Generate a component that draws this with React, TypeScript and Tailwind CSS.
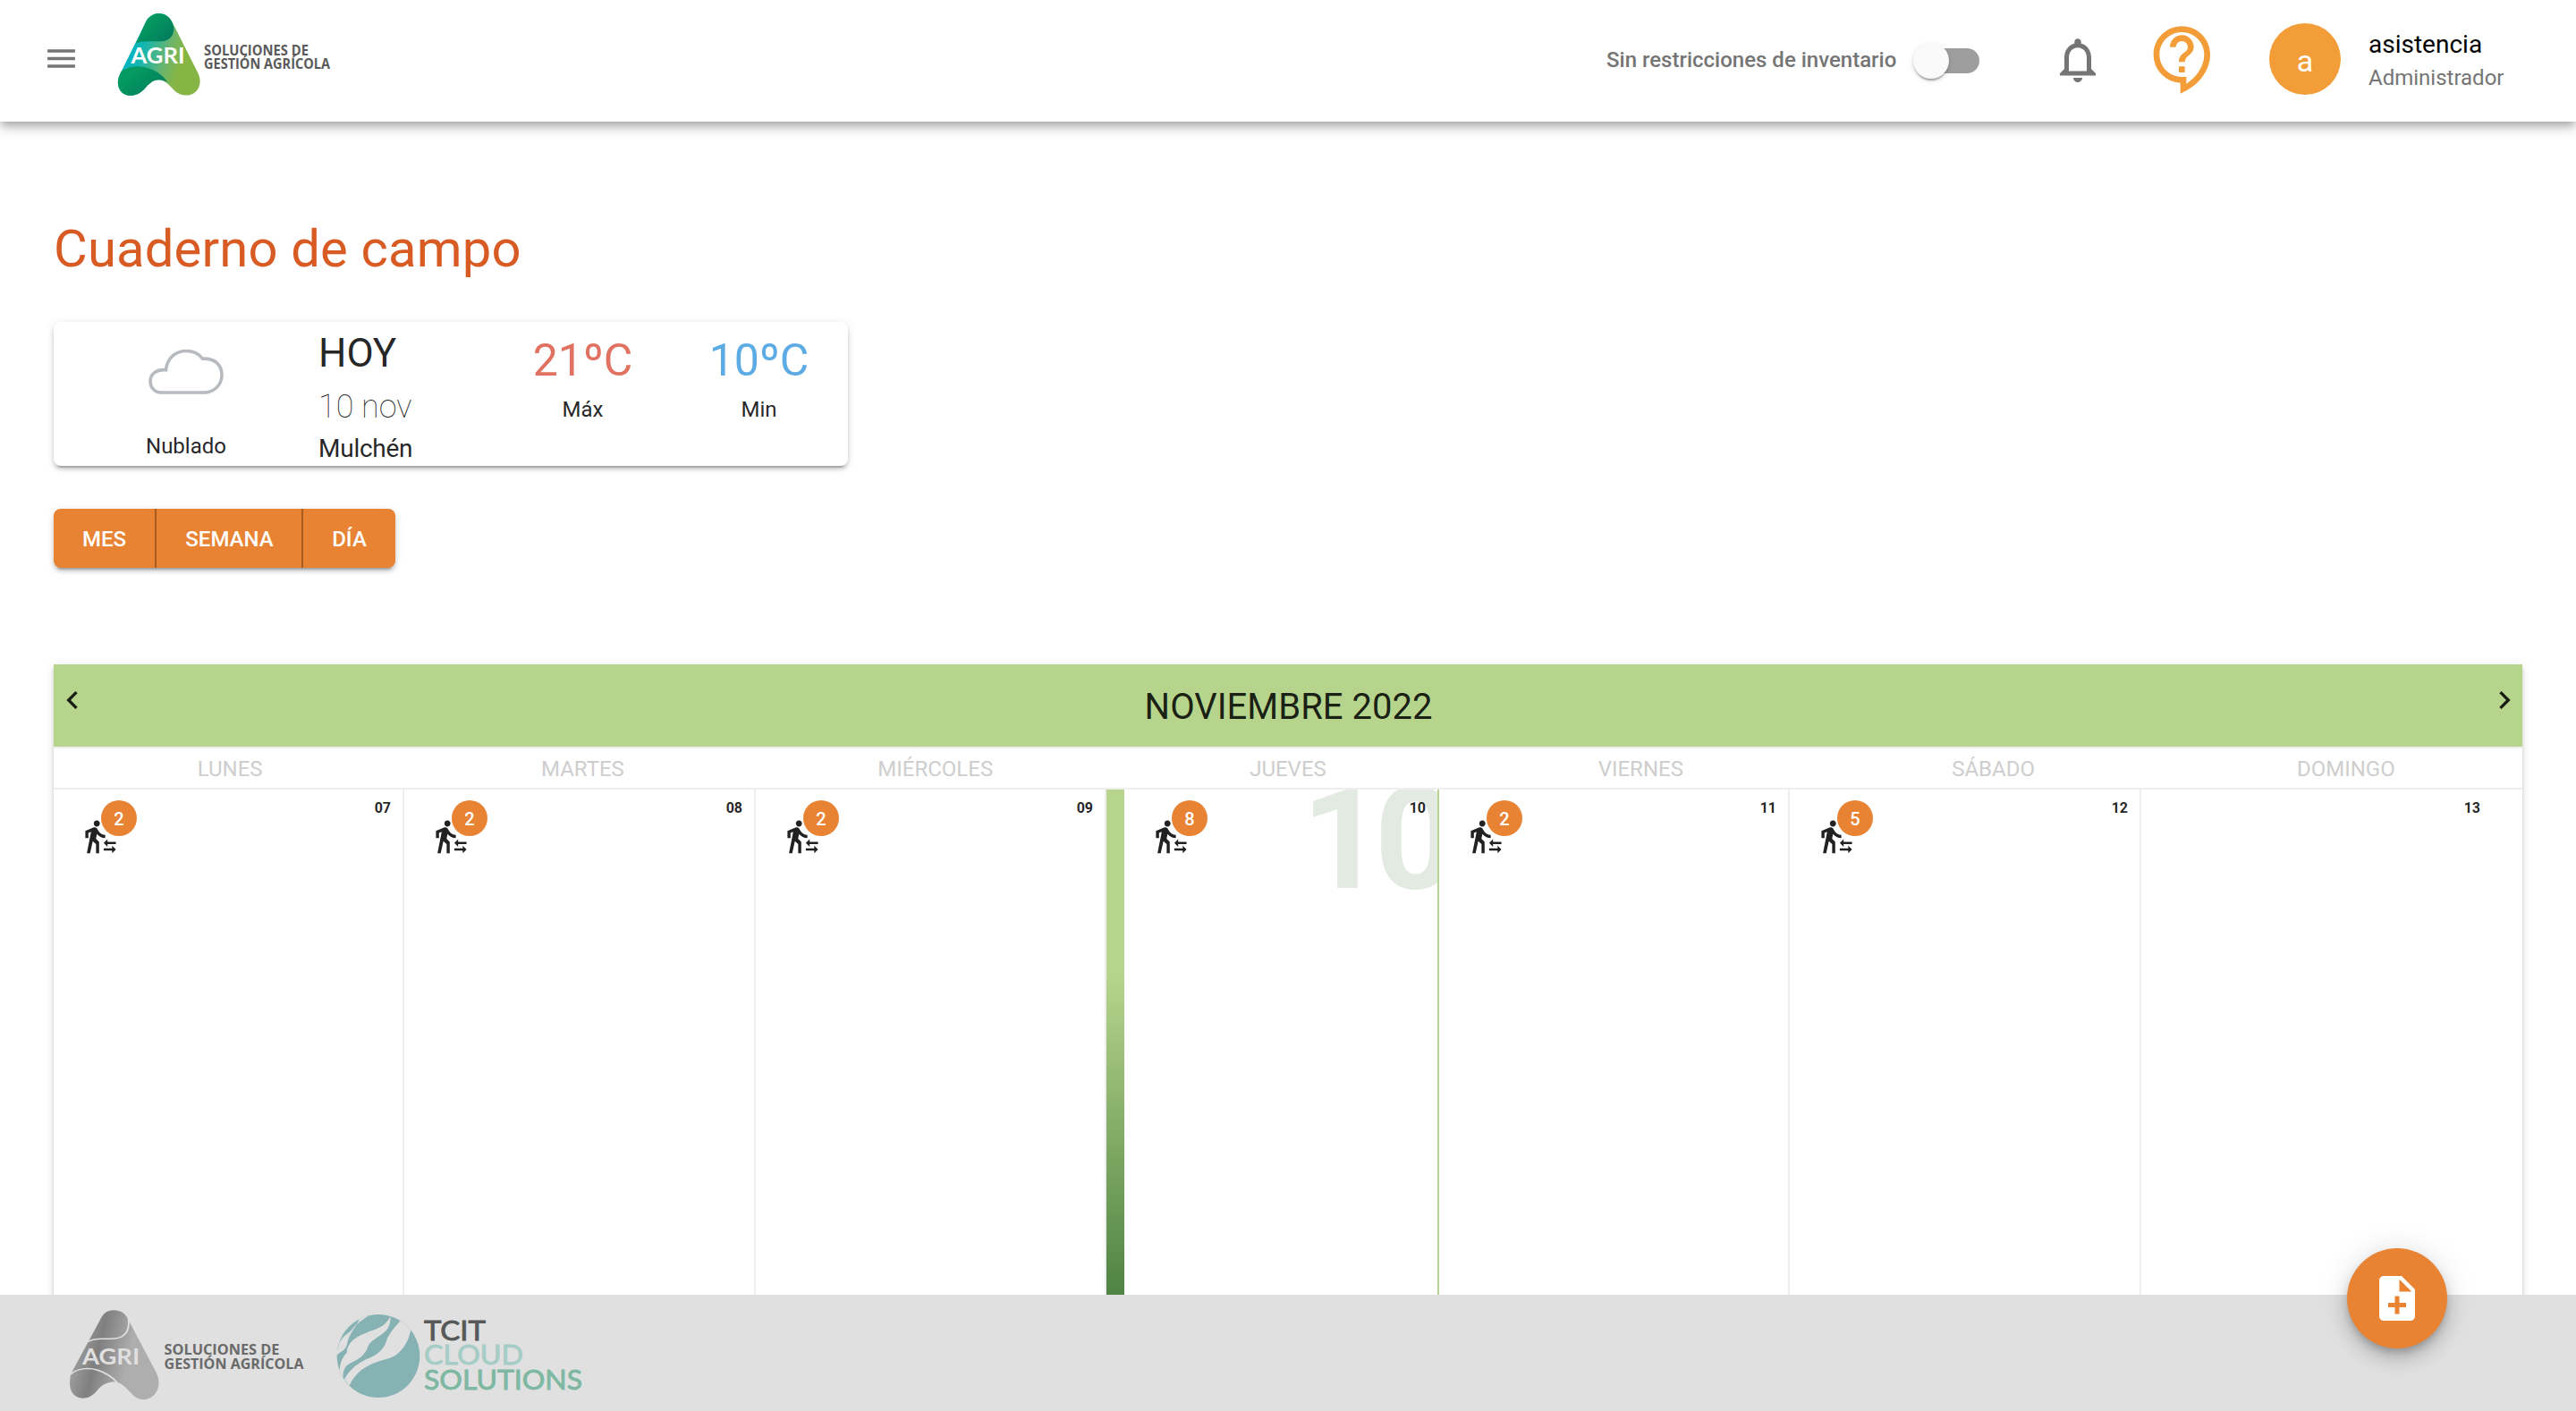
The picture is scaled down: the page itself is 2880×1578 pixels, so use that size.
import React from "react";

type Day = { date: string; count?: number; width: string; today?: boolean };

const weekDays = ["LUNES", "MARTES", "MIÉRCOLES", "JUEVES", "VIERNES", "SÁBADO", "DOMINGO"];

const days: Day[] = [
  { date: "07", count: 2, width: "w-[392px]" },
  { date: "08", count: 2, width: "w-[393px]" },
  { date: "09", count: 2, width: "w-[392px]" },
  { date: "10", count: 8, width: "w-[372px]", today: true },
  { date: "11", count: 2, width: "w-[392px]" },
  { date: "12", count: 5, width: "w-[393px]" },
  { date: "13", width: "grow" },
];

function Icon({ d, className }: { d: string; className: string }) {
  return (
    <svg viewBox="0 0 24 24" fill="currentColor" className={`block shrink-0 ${className}`}>
      <path d={d} />
    </svg>
  );
}

const ICONS = {
  menu: "M3 18h18v-2H3v2zm0-5h18v-2H3v2zm0-7v2h18V6H3z",
  bell: "M12 22c1.1 0 2-.9 2-2h-4c0 1.1.9 2 2 2zm6-6v-5c0-3.07-1.63-5.64-4.5-6.32V4c0-.83-.67-1.5-1.5-1.5s-1.5.67-1.5 1.5v.68C7.64 5.36 6 7.92 6 11v5l-2 2v1h16v-1l-2-2zm-2 1H8v-6c0-2.48 1.51-4.5 4-4.5s4 2.02 4 4.5v6z",
  support:
    "M11 23.59v-3.6c-5.01-.26-9-4.42-9-9.49C2 5.26 6.26 1 11.5 1S21 5.26 21 10.5c0 4.95-3.44 9.93-8.57 12.4l-1.43.69zM11.5 3C7.36 3 4 6.36 4 10.5S7.36 18 11.5 18H13v2.3c3.64-2.3 6-6.08 6-9.8C19 6.36 15.64 3 11.5 3zm-1 11.5h2v2h-2v-2zm2-1.5h-2c0-3.25 3-3 3-5 0-1.1-.9-2-2-2s-2 .9-2 2h-2c0-2.21 1.79-4 4-4s4 1.79 4 4c0 2.5-3 2.75-3 5z",
  left: "M15.41 7.41 14 6l-6 6 6 6 1.41-1.41L10.83 12z",
  right: "M10 6 8.59 7.41 13.17 12l-4.58 4.59L10 18l6-6z",
  transfer:
    "M16.49 15.5v-1.75L14 16.25l2.49 2.5V17H22v-1.5h-5.51zM19.51 19.75H14v1.5h5.51V23L22 20.5 19.51 18v1.75zM9.5 5.5c1.1 0 2-.9 2-2s-.9-2-2-2-2 .9-2 2 .9 2 2 2zM5.75 8.9L3 23h2.1l1.75-8L9 17v6h2v-7.55L8.95 13.4l.6-3C10.85 12 12.8 13 15 13v-2c-1.85 0-3.45-1-4.35-2.45l-.95-1.6C9.35 6.35 8.7 6 8 6c-.25 0-.5.05-.75.15L2 8.3V13h2V9.65l1.75-.75z",
  noteAdd:
    "M14 2H6c-1.1 0-1.99.9-1.99 2L4 20c0 1.1.89 2 1.99 2H18c1.1 0 2-.9 2-2V8l-6-6zm2 14h-3v3h-2v-3H8v-2h3v-3h2v3h3v2zm-3-7V3.5L18.5 9H13z",
};

function Label(props: {
  x: number;
  y: number;
  w: number;
  size: number;
  fill: string;
  weight?: number;
  family?: string;
  outline?: number;
  children: string;
}) {
  return (
    <text
      x={props.x}
      y={props.y}
      textLength={props.w}
      lengthAdjust="spacingAndGlyphs"
      fontSize={props.size}
      fontWeight={props.weight ?? 700}
      fontFamily={props.family ?? "'Open Sans', sans-serif"}
      fill={props.fill}
      stroke={props.fill}
      strokeWidth={props.outline ?? 0}
    >
      {props.children}
    </text>
  );
}

function HeaderLogo() {
  return (
    <svg viewBox="131 0 240 136" className="ml-[42px] h-[136px] w-60 shrink-0">
      <defs>
        <linearGradient id="band" x1="0" y1="0.3" x2="1" y2="0.6">
          <stop offset="0.1" stopColor="#00b3c6" />
          <stop offset="0.3" stopColor="#0fb6b4" />
          <stop offset="0.62" stopColor="#6db56a" />
          <stop offset="0.78" stopColor="#86b545" />
        </linearGradient>
        <linearGradient id="leaf" x1="0" y1="0" x2="1" y2="0.8">
          <stop offset="0.3" stopColor="#049a60" />
          <stop offset="1" stopColor="#027a5e" />
        </linearGradient>
      </defs>
      <g transform="scale(0.33333)">
        <path
          fill="url(#band)"
          d="M487 78C496 57 512 45 533 45C556 45 572 58 583 85L665 247C678 276 668 302 648 314C626 325 603 320 584 303C566 284 552 269 533 268C512 268 498 283 485 298C465 320 442 325 420 317C396 305 389 278 402 250Z"
        />
        <path
          fill="url(#leaf)"
          d="M487 78C496 57 512 45 533 45C562 45 582 70 583 98C582 122 566 138 538 139L492 139C476 139 465 141 455 148Z"
        />
        <path
          fill="url(#leaf)"
          d="M408 238C440 218 475 219 505 231C530 241 550 257 562 276C552 271 543 268 533 268C512 268 498 283 485 298C465 320 442 325 420 317C396 305 389 278 402 250Z"
        />
      </g>
      <Label x={146.5} y={70.5} w={60} size={24} fill="#fff" family="Lato, sans-serif">
        AGRI
      </Label>
      <Label x={228} y={61.5} w={117} size={15.5} fill="#5a5a5a">
        SOLUCIONES DE
      </Label>
      <Label x={228} y={76.5} w={141} size={15.5} fill="#5a5a5a">
        GESTIÓN AGRÍCOLA
      </Label>
    </svg>
  );
}

function FooterLogos() {
  return (
    <svg viewBox="40 1448 640 130" className="ml-10 h-[130px] w-[640px]">
      <defs>
        <linearGradient id="steel" x1="0" y1="0" x2="1" y2="0.25">
          <stop offset="0" stopColor="#b4b4b4" />
          <stop offset="0.4" stopColor="#7f7f7f" />
          <stop offset="0.75" stopColor="#aeaeae" />
        </linearGradient>
        <clipPath id="globe">
          <ellipse cx="910" cy="289.5" rx="110" ry="139.5" />
        </clipPath>
      </defs>
      <g transform="translate(40 1420) scale(0.4209 0.33333)">
        <path
          fill="url(#steel)"
          d="M171 168C178 148 190 136 207 136C226 136 239 148 246 168L320 345C333 380 326 410 308 427C292 440 276 439 261 424C243 402 229 377 207 376C184 378 172 392 161 408C146 430 130 434 114 429C92 418 86 390 93 350Z"
        />
        <path
          fill="none"
          stroke="#e0e0e0"
          strokeWidth="4.5"
          d="M140 241C155 230 170 232 185 232C215 233 235 228 243 205C248 190 248 178 246 160M92 351C112 330 140 328 162 336C185 345 202 358 216 378"
        />
        <g clipPath="url(#globe)">
          <path fill="#86b2b3" d="M790 140H1030V440H790Z" />
          <g fill="#e0e0e0">
            <path d="M968 172C945 205 935 222 930 245C920 275 900 290 877 301C850 318 832 338 820 368L833 389C845 355 865 332 890 318C910 304 935 302 955 288C980 265 990 235 996 204L1015 170L975 150Z" />
            <path d="M942 155C932 185 915 195 885 208C850 225 828 242 826 278C811 298 807 320 807 346L816 367C815 335 822 322 838 312C865 296 877 280 882 258C890 235 915 225 930 205C940 190 942 175 942 155Z" />
            <path d="M859 166C853 190 842 200 832 210C815 225 806 240 803 262C820 258 826 245 829 225C836 200 855 178 882 156L868 140Z" />
            <path d="M856 175C842 205 830 225 827 250C822 275 805 275 799 290L790 285L803 262C822 258 825 235 834 210Z" />
          </g>
        </g>
      </g>
      <Label x={92} y={1525.5} w={64} size={25} fill="#e0e0e0" family="Lato, sans-serif">
        AGRI
      </Label>
      <Label x={183.5} y={1515} w={129} size={16.5} fill="#6a6a6a">
        SOLUCIONES DE
      </Label>
      <Label x={183.5} y={1531} w={156} size={16.5} fill="#6a6a6a">
        GESTIÓN AGRÍCOLA
      </Label>
      <Label x={474} y={1498.5} w={69} size={31} fill="#575959" weight={400} outline={0.9} family="Lato, sans-serif">
        TCIT
      </Label>
      <Label x={474} y={1526} w={111} size={31} fill="#a5cdc5" weight={400} outline={0.9} family="Lato, sans-serif">
        CLOUD
      </Label>
      <Label x={474} y={1554} w={177} size={31} fill="#7fb8a2" weight={400} outline={0.9} family="Lato, sans-serif">
        SOLUTIONS
      </Label>
    </svg>
  );
}

function Header() {
  return (
    <header className="relative z-10 flex h-[136px] items-start bg-white shadow-[0_4px_8px_-2px_rgba(0,0,0,0.2),0_8px_10px_rgba(0,0,0,0.14),0_2px_20px_rgba(0,0,0,0.12)]">
      <Icon d={ICONS.menu} className="mt-[45px] ml-12 size-[41px] text-[#757575]" />
      <HeaderLogo />
      <div className="ml-auto flex w-[1084px] items-start">
        <span className="mt-[53px] w-[343px] text-2xl leading-7 font-medium whitespace-nowrap text-[#757575]">
          Sin restricciones de inventario
        </span>
        <div className="relative mt-12 h-10 w-[74px]">
          <div className="absolute top-1.5 right-0 h-7 w-[68px] rounded-full bg-[#9e9e9e]" />
          <div className="absolute top-0 left-0 size-10 rounded-full bg-[#fafafa] shadow-[0_4px_2px_-2px_rgba(0,0,0,0.2),0_2px_2px_rgba(0,0,0,0.14),0_2px_6px_rgba(0,0,0,0.12)]" />
        </div>
        <Icon d={ICONS.bell} className="mt-[37px] ml-20 size-[60px] text-[#757575]" />
        <Icon d={ICONS.support} className="mt-[26px] ml-12 size-20 text-[#f39d38]" />
        <div className="mt-[26px] ml-14 flex size-20 items-center justify-center rounded-full bg-[#f39d38] pt-[3px] text-[34px] leading-none text-white">
          a
        </div>
        <div className="ml-[31px] flex flex-col">
          <span className="mt-[34px] text-[28px] leading-8 text-black">asistencia</span>
          <span className="mt-[7px] text-2xl leading-7 text-[#757575]">Administrador</span>
        </div>
      </div>
    </header>
  );
}

function Temperature({ value, label, color }: { value: string; label: string; color: string }) {
  return (
    <div className="flex w-[197px] flex-col items-center pt-3.5">
      <span className={`text-[50px] leading-[58px] ${color}`}>{value}</span>
      <span className="mt-3 text-2xl leading-7">{label}</span>
    </div>
  );
}

function WeatherCard() {
  return (
    <section className="mt-12 flex h-[161px] w-[888px] rounded-lg bg-white shadow-[0_6px_2px_-4px_rgba(0,0,0,0.2),0_4px_4px_rgba(0,0,0,0.14),0_2px_10px_rgba(0,0,0,0.12)]">
      <div className="flex w-[296px] flex-col items-center pt-[30px]">
        <svg viewBox="0 0 84 52" className="h-[52px] w-[84px]" fill="none" stroke="#b7babe" strokeWidth="3.6">
          <path d="M14 49H64C75 48 82 39 82 29.500C82 17 73 10.500 60.500 11.200C56 5 49 2.500 42 2.500C29 2.500 20.500 12 19.500 23.800C9 22.500 2 28.500 2 36.500C2 43.500 7 49 14 49Z" />
        </svg>
        <span className="mt-[43px] text-2xl leading-7">Nublado</span>
      </div>
      <div className="flex w-[197px] flex-col pt-2.5">
        <span className="text-[44px] leading-[50px]">HOY</span>
        <span className="mt-3.5 text-4xl leading-[42px] font-thin">10 nov</span>
        <span className="mt-2.5 text-[28px] leading-8 tracking-[-0.25px]">Mulchén</span>
      </div>
      <Temperature value="21ºC" label="Máx" color="text-[#e17262]" />
      <Temperature value="10ºC" label="Min" color="text-[#5dabe4]" />
    </section>
  );
}

function ViewSwitch() {
  return (
    <div className="mt-12 flex h-[66px] w-[382px] rounded-lg bg-[#e88333] text-2xl font-medium text-white shadow-[0_6px_2px_-4px_rgba(0,0,0,0.2),0_4px_4px_rgba(0,0,0,0.14),0_2px_10px_rgba(0,0,0,0.12)]">
      <button className="w-[115px] border-r-2 border-[#a75c1e] pt-0.5">MES</button>
      <button className="w-[164px] border-r-2 border-[#a75c1e] pt-0.5 pl-px">SEMANA</button>
      <button className="w-[103px] pt-0.5">DÍA</button>
    </div>
  );
}

function DayCell({ day, last }: { day: Day; last: boolean }) {
  const edge = last ? "pr-[47px]" : day.today ? "border-r-2 border-[#b6d48b] pr-[13px]" : "border-r-2 border-[#eee] pr-[13px]";
  return (
    <div className={`relative flex items-start overflow-hidden ${day.width} ${edge}`}>
      {day.today && (
        <>
          <div className="h-full w-5 shrink-0 bg-linear-to-b from-[#b6d48b] from-37% to-[#4f8444]" />
          <span className="absolute top-[-39px] left-[218px] text-[160px] leading-[190px] font-bold tracking-[-10px] text-[#e2eae1]">
            10
          </span>
        </>
      )}
      {day.count !== undefined && (
        <div className="relative mt-8 ml-8">
          <Icon d={ICONS.transfer} className="size-[41px]" />
          <span className="absolute top-[-20px] left-[21px] flex size-10 items-center justify-center rounded-full bg-[#e88333] pt-0.5 text-xl font-medium text-white">
            {day.count}
          </span>
        </div>
      )}
      <span className="relative mt-[11px] ml-auto text-base leading-5 font-bold">{day.date}</span>
    </div>
  );
}

function Calendar() {
  return (
    <section className="mt-[108px] flex h-[760px] flex-col bg-white shadow-[0_6px_2px_-4px_rgba(0,0,0,0.2),0_4px_4px_rgba(0,0,0,0.14),0_2px_10px_rgba(0,0,0,0.12)]">
      <div className="flex h-[92px] items-start justify-between bg-[#b6d48b] text-black/87">
        <Icon d={ICONS.left} className="mt-5 ml-px size-10" />
        <h2 className="mt-[25px] text-[40px] leading-[46px]">NOVIEMBRE 2022</h2>
        <Icon d={ICONS.right} className="mt-5 size-10" />
      </div>
      <div className="grid h-12 grid-cols-7 border-y-2 border-[#eee] pt-[9px] text-center text-2xl leading-7 text-[#cecece]">
        {weekDays.map((name) => (
          <span key={name}>{name}</span>
        ))}
      </div>
      <div className="flex h-[565px]">
        {days.map((day, i) => (
          <DayCell key={day.date} day={day} last={i === days.length - 1} />
        ))}
      </div>
    </section>
  );
}

export default function App() {
  return (
    <div className="relative flex h-[1578px] w-[2880px] flex-col overflow-hidden bg-white font-[Roboto,sans-serif] text-black/87">
      <Header />
      <main className="h-[1312px] overflow-hidden px-[60px]">
        <h1 className="mt-[108px] text-[58px] leading-[68px] tracking-[0.15px] text-[#d95b24]">Cuaderno de campo</h1>
        <WeatherCard />
        <ViewSwitch />
        <Calendar />
      </main>
      <footer className="h-[130px] bg-[#e0e0e0]">
        <FooterLogos />
      </footer>
      <button className="absolute right-36 bottom-[70px] flex size-28 items-center justify-center rounded-full bg-[#e88333] text-white shadow-[0_6px_10px_-2px_rgba(0,0,0,0.2),0_12px_20px_rgba(0,0,0,0.14),0_2px_36px_rgba(0,0,0,0.12)]">
        <Icon d={ICONS.noteAdd} className="size-[60px]" />
      </button>
    </div>
  );
}
